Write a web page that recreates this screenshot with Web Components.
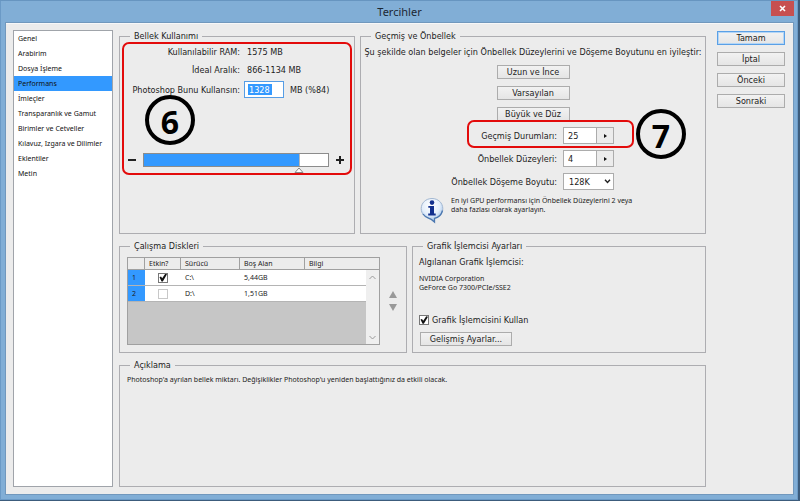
<!DOCTYPE html>
<html lang="tr">
<head>
<meta charset="utf-8">
<title>Tercihler</title>
<style>
html, body { height: 100%; }
body { margin: 0; background: #3c5c7c; color: #1c1c1c; font: 9px/14px "DejaVu Sans Condensed", "DejaVu Sans", sans-serif; --small: 7px/9px "Noto Sans", sans-serif; --line: #adadb1; --accent: #3399ff; }
</style>
</head>
<body>
<preferences-window heading="Tercihler">
  <category-list slot="nav"></category-list>
  <settings-layout slot="main"></settings-layout>
  <dialog-actions slot="actions"></dialog-actions>
  <mark-frame slot="marks" style="left:122px;top:42px;width:230px;height:133px"></mark-frame>
  <mark-number slot="marks" style="left:145px;top:95px">6</mark-number>
  <mark-frame slot="marks" style="left:467px;top:120px;width:167px;height:28px"></mark-frame>
  <mark-number slot="marks" style="left:636px;top:109px">7</mark-number>
</preferences-window>
<script>
const shared = `
  :host, *, *::before { box-sizing: border-box; }
  button, input, select { font: inherit; color: inherit; margin: 0; padding: 0; border-radius: 0; }
  .btn { height: 14px; line-height: 12px; border: 1px solid #acacac; background: linear-gradient(#f2f2f2, #e5e5e5); text-align: center; white-space: nowrap; }
  .check { appearance: none; width: 10px; height: 10px; flex: none; border: 1px solid #777; background: #fff; display: inline-grid; place-items: center; vertical-align: middle; }
  .check:checked::before { content: ""; width: 8px; height: 8px; background: #111; clip-path: polygon(6% 45%, 25% 38%, 40% 60%, 78% 3%, 100% 8%, 48% 98%, 32% 98%); }
`;
function define(name, html, css, setup) {
  customElements.define(name, class extends HTMLElement {
    constructor() {
      super();
      this.attachShadow({ mode: 'open' }).innerHTML = `<style>${shared}${css}</style>${html}`;
    }
    connectedCallback() { if (setup) setup(this, this.shadowRoot); }
  });
}

define('group-box', `<fieldset><legend></legend><slot></slot></fieldset>`, `
  :host { display: flex; min-width: 0; }
  fieldset { flex: 1; min-width: 0; margin: 0; padding: 0; border: 1px solid var(--line); }
  legend { margin-left: 10px; padding: 0 4px; height: 15px; line-height: 15px; }
`, (el, root) => { root.querySelector('legend').textContent = el.getAttribute('label'); });

define('preferences-window', `
  <header><h1></h1><button aria-label="Kapat"><svg width="7" height="7" viewBox="0 0 7 7"><path d="M1 1l5 5M6 1L1 6" stroke="#fff" stroke-width="1.6"/></svg></button></header>
  <main><slot name="nav"></slot><slot name="main"></slot><slot name="actions"></slot></main>
  <slot name="marks"></slot>`, `
  :host { position: relative; display: flex; flex-direction: column; height: calc(100vh - 1px); margin-right: 2px; padding: 0 5px 6px 6px; background: #81aed6; border-top: 1px solid #6795c0; box-shadow: inset 1px 0 #6b9ac6, inset -1px -1px #6b9ac6; }
  header { display: flex; height: 22px; margin-right: -1px; }
  h1 { flex: 1; margin: 0; padding-left: 22px; text-align: center; font: 11px/21px "Noto Sans", sans-serif; color: #1c2733; }
  header button { width: 23px; height: 15px; border: 0; background: #c75050; display: grid; place-items: center; }
  main { flex: 1; min-height: 0; display: flex; padding: 5px 8px 7px 7px; background: #ececec; border-top: 1px solid #f8f8f8; box-shadow: 0 0 0 1px #7198bd; }
`, (el, root) => { root.querySelector('h1').textContent = el.getAttribute('heading'); });

define('category-list', `<nav></nav>`, `
  :host { display: block; width: 100px; flex: none; margin: 1px 6px 0 0; border: 1px solid #a0a4aa; background: #fff; font: var(--small); }
  a { display: block; height: 15px; line-height: 15px; padding-left: 4px; color: #111; text-decoration: none; white-space: nowrap; }
  a[aria-current] { background: var(--accent); }
`, (el, root) => {
  root.querySelector('nav').innerHTML = ['Genel', 'Arabirim', 'Dosya İşleme', 'Performans', 'İmleçler', 'Transparanlık ve Gamut', 'Birimler ve Cetveller', 'Kılavuz, Izgara ve Dilimler', 'Eklentiler', 'Metin']
    .map(t => `<a href="#"${t === 'Performans' ? ' aria-current="page"' : ''}>${t}</a>`).join('');
});

define('dialog-actions', `<button class="btn ok">Tamam</button><button class="btn">İptal</button><button class="btn">Önceki</button><button class="btn">Sonraki</button>`, `
  :host { display: flex; flex-direction: column; gap: 7px; width: 68px; flex: none; margin-left: 11px; padding-top: 2px; }
  .ok { border-color: #5aa0e6; box-shadow: inset 0 0 0 1px #b4d6f6; }
`);

define('settings-layout', `
  <div class="row a"><group-box label="Bellek Kullanımı"><memory-panel></memory-panel></group-box><group-box label="Geçmiş ve Önbellek"><history-panel></history-panel></group-box></div>
  <div class="row b"><group-box label="Çalışma Diskleri"><disk-panel></disk-panel></group-box><group-box label="Grafik İşlemcisi Ayarları"><gpu-panel></gpu-panel></group-box></div>
  <group-box class="c" label="Açıklama"><p>Photoshop'a ayrılan bellek miktarı. Değişiklikler Photoshop'u yeniden başlattığınız da etkili olacak.</p></group-box>`, `
  :host { flex: 1; min-width: 0; display: flex; flex-direction: column; gap: 5px; }
  .row { display: grid; gap: 5px; }
  .a { grid-template-columns: 236fr 346fr; }
  .b { grid-template-columns: 288fr 294fr; }
  .c { flex: 1; }
  p { margin: 0; padding: 2px 7px; font: var(--small); }
`);

define('memory-panel', `
  <div class="facts">
    <span>Kullanılabilir RAM:</span><span class="v">1575 MB</span>
    <span>İdeal Aralık:</span><span class="v">866-1134 MB</span>
    <label for="use">Photoshop Bunu Kullansın:</label><span class="use"><input id="use" type="text" value="1328">MB (%84)</span>
  </div>
  <div class="slider"><i class="sign"></i>
    <span class="track"><input type="range" min="0" max="100" value="84" aria-label="Bellek"><svg width="10" height="7" viewBox="0 0 10 7"><path d="M5 1L9 5.5H1Z" fill="#fff" stroke="#888"/></svg></span>
    <i class="sign plus"></i></div>`, `
  :host { display: block; padding: 1px 10px 0 0; }
  .facts { display: grid; grid-template-columns: 120px 1fr; column-gap: 4px; row-gap: 4px; text-align: right; align-items: center; }
  .facts > * { white-space: nowrap; }
  .v { text-align: left; padding-left: 3px; }
  .use { display: flex; gap: 6px; align-items: center; }
  .use input { width: 40px; height: 17px; border: 1px solid #569de5; padding-left: 4px; color: #fff; background: linear-gradient(var(--accent), var(--accent)) 3px 2px / 24px 11px no-repeat #fff; }
  .slider { display: grid; grid-template-columns: 8px 1fr 8px; column-gap: 7px; margin: 55px 0 0 8px; }
  .sign { height: 2px; background: linear-gradient(#222, #222); margin-top: 6px; }
  .plus { height: 8px; margin-top: 3px; background: linear-gradient(#222, #222) center / 2px 8px no-repeat, linear-gradient(#222, #222) center / 8px 2px no-repeat; }
  .track { position: relative; height: 21px; }
  .track input { display: block; width: 100%; height: 14px; appearance: none; border: 1px solid #8c8c8c; background: linear-gradient(90deg, var(--accent) 84%, #6c6c6c 84%, #fff 85%); }
  .track input::-webkit-slider-thumb { appearance: none; width: 1px; height: 12px; background: transparent; }
  .track svg { position: absolute; top: 14px; left: calc(84% - 5px); }
`);

define('history-panel', `
  <p class="intro">Şu şekilde olan belgeler için Önbellek Düzeylerini ve Döşeme Boyutunu en iyileştir:</p>
  <div class="presets"><button class="btn">Uzun ve İnce</button><button class="btn">Varsayılan</button><button class="btn">Büyük ve Düz</button></div>
  <div class="fields">
    <label for="states">Geçmiş Durumları:</label><span class="step"><input id="states" type="text" value="25"><button aria-label="Durumları değiştir"><i></i></button></span>
    <label for="levels">Önbellek Düzeyleri:</label><span class="step"><input id="levels" type="text" value="4"><button aria-label="Düzeyleri değiştir"><i></i></button></span>
    <label for="tile">Önbellek Döşeme Boyutu:</label><span class="pick"><select id="tile"><option>128K</option></select><svg width="7" height="5" viewBox="0 0 7 5"><path d="M1 .8L3.5 3.5L6 .8" fill="none" stroke="#222" stroke-width="1.4"/></svg></span>
  </div>
  <div class="note">
    <svg width="24" height="27" viewBox="0 0 24 27"><defs><radialGradient id="g" cx=".45" cy=".3" r=".75"><stop offset="0" stop-color="#fff"/><stop offset=".55" stop-color="#e3eefb"/><stop offset="1" stop-color="#88b1e0"/></radialGradient></defs>
      <path d="M12 1.5C5.8 1.5 1.2 6 1.2 11.6C1.2 16.8 5 20.8 10 21.5C11.2 22.5 12.5 24 14.5 25V21.3C19.4 20.3 22.8 16.5 22.8 11.6C22.8 6 18.2 1.5 12 1.5Z" fill="url(#g)" stroke="#a3b8d2"/>
      <path d="M3 17C6 21.5 10 21.2 11.5 22.4L14.5 25V21.3C18 20.7 21.4 18 22.5 13.5" fill="none" stroke="#4c78b0" stroke-width="1.3"/>
      <circle cx="12" cy="5.6" r="2.3" fill="#12308e"/><path d="M8.3 9H14V16.6H15.7V18.4H8.2V16.600H10V10.800H8.3Z" fill="#12308e"/></svg>
    <p>En iyi GPU performansı için Önbellek Düzeylerini 2 veya<br>daha fazlası olarak ayarlayın.</p>
  </div>`, `
  :host { display: block; padding: 1px 0 9px; }
  p { margin: 0; }
  .intro { text-align: center; white-space: nowrap; }
  .presets { display: grid; grid-template-columns: 73px; justify-content: center; gap: 7px; margin-top: 6px; }
  .fields { display: grid; grid-template-columns: 196px 51px; column-gap: 6px; row-gap: 6px; margin-top: 6px; align-items: center; text-align: right; }
  .step { display: flex; height: 17px; }
  .step input { flex: 1; min-width: 0; border: 1px solid #acacac; padding-left: 4px; background: #fff; }
  .step button { width: 17px; border: 1px solid #acacac; border-left: 0; background: #ececec; display: grid; place-items: center; }
  .step i { border: solid transparent; border-width: 2px 0 2px 3px; border-left-color: #111; }
  .pick { position: relative; display: block; }
  select { appearance: none; display: block; width: 100%; height: 17px; border: 1px solid #acacac; background: #fff; padding-left: 5px; }
  .pick svg { position: absolute; right: 3px; top: 6px; pointer-events: none; }
  .note { display: flex; gap: 7px; padding-left: 59px; margin-top: 6px; font: var(--small); }
  .note svg { margin-top: 1px; }
`);

define('disk-panel', `
  <table>
    <colgroup><col style="width:17px"><col style="width:36px"><col style="width:59px"><col style="width:65px"><col><col style="width:13px"></colgroup>
    <thead><tr><th></th><th>Etkin?</th><th>Sürücü</th><th>Boş Alan</th><th colspan="2">Bilgi</th></tr></thead>
    <tbody>
      <tr><td class="n">1</td><td class="k"><input class="check" type="checkbox" checked aria-label="C:"></td><td>C:\\</td><td>5,44GB</td><td></td>
        <td class="bar" rowspan="3"><div><svg width="7" height="5" viewBox="0 0 7 5"><path d="M.5 4L3.500 1L6.500 4" fill="none" stroke="#9a9a9a"/></svg><svg width="7" height="5" viewBox="0 0 7 5"><path d="M.5 1L3.500 4L6.500 1" fill="none" stroke="#9a9a9a"/></svg></div></td></tr>
      <tr><td class="n">2</td><td class="k"><input class="check off" type="checkbox" aria-label="D:"></td><td>D:\\</td><td>1,51GB</td><td></td></tr>
      <tr class="rest"><td colspan="5"></td></tr>
    </tbody>
  </table>
  <div class="order"><button aria-label="Yukarı"><svg width="8" height="7" viewBox="0 0 8 7"><path d="M4 0L8 7H0Z" fill="#999"/></svg></button><button aria-label="Aşağı"><svg width="8" height="7" viewBox="0 0 8 7"><path d="M4 7L8 0H0Z" fill="#999"/></svg></button></div>`, `
  :host { display: flex; padding: 3px 0 7px 7px; font: var(--small); }
  table { flex: 1; table-layout: fixed; width: 0; border-spacing: 0; border: 1px solid #a0a0a0; background: #fff; }
  th { height: 12px; padding: 0 0 0 4px; text-align: left; font-weight: 400; background: #ececec; border-bottom: 1px solid #a0a0a0; border-right: 1px solid #a0a0a0; }
  th:last-child { border-right: 0; }
  td { height: 16px; padding: 0 0 0 4px; border-bottom: 1px solid #b4b4b4; }
  td.n { background: var(--accent); }
  td.k { text-align: center; padding: 0; }
  .off { border-color: #c8c8c8; }
  .rest td { height: 42px; background: #c6c6c6; border: 0; }
  td.bar { padding: 0; background: #efefef; border: 0; height: 74px; }
  .bar div { display: flex; flex-direction: column; justify-content: space-between; align-items: center; height: 74px; padding: 5px 0 4px; }
  .order { width: 26px; display: flex; flex-direction: column; justify-content: center; align-items: center; gap: 6px; }
  .order button { border: 0; background: none; display: flex; }
`);

define('gpu-panel', `
  <p>Algılanan Grafik İşlemcisi:</p>
  <p class="s">NVIDIA Corporation<br>GeForce Go 7300/PCIe/SSE2</p>
  <label><input class="check" type="checkbox" checked>Grafik İşlemcisini Kullan</label>
  <button class="btn">Gelişmiş Ayarlar...</button>`, `
  :host { display: flex; flex-direction: column; align-items: flex-start; padding: 1px 6px 6px; }
  p { margin: 0; }
  .s { font: var(--small); margin-top: 5px; }
  label { display: flex; align-items: center; gap: 3px; margin-top: 21px; }
  .btn { width: 92px; margin: 5px 0 0 1px; }
`);

define('mark-frame', ``, `
  :host { position: absolute; border: 2px solid #e30b0b; border-radius: 7px; pointer-events: none; margin-top: -1px; }
`);
define('mark-number', `<slot></slot>`, `
  :host { position: absolute; width: 50px; height: 50px; margin-top: -1px; padding-top: 2px; border: 4px solid #000; border-radius: 50%; text-align: center; color: #000; font: bold 32px/42px "Open Sans", sans-serif; pointer-events: none; }
`);
</script>
</body>
</html>
